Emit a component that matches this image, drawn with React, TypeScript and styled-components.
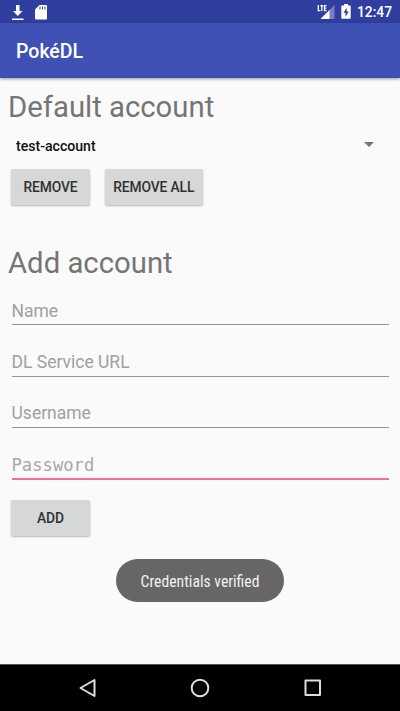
import React from "react";
import styled, { createGlobalStyle } from "styled-components";

const Global = createGlobalStyle`
  * { box-sizing: border-box; }
  body { margin: 0; background: #fafafa; font-family: Roboto, sans-serif; }
`;

const Screen = styled.div`
  position: relative;
  display: flex;
  flex-direction: column;
  width: 400px;
  height: 711px;
  overflow: hidden;
  background: #fafafa;
`;

const StatusBar = styled.div`
  display: flex;
  align-items: center;
  flex: none;
  height: 23px;
  padding: 0 8px 0 10px;
  background: #303f9f;
  color: #fff;

  svg { display: block; }
`;

const StatusGroup = styled.div<{ $end?: boolean }>`
  display: flex;
  align-items: center;
  gap: ${(p) => (p.$end ? 6 : 10)}px;
  margin-left: ${(p) => (p.$end ? "auto" : 0)};
`;

const Clock = styled.span`
  font-size: 13.8px;
  line-height: 23px;
  font-weight: 500;
  padding-top: 2px;
`;

const AppBar = styled.header`
  display: flex;
  align-items: center;
  flex: none;
  height: 55px;
  padding: 1px 16px 0;
  background: #3f51b5;
  color: #fff;
  font-size: 19.5px;
  font-weight: 500;
  box-shadow: 0 1px 3px rgba(0, 0, 0, 0.4);
`;

const Content = styled.main`
  display: flex;
  flex-direction: column;
  flex: 1;
  padding: 9px 8px 0;
`;

const Heading = styled.h1`
  margin: 0;
  height: 41px;
  line-height: 41px;
  font-size: 29.3px;
  font-weight: 400;
  color: #757575;
`;

const Spinner = styled.div`
  display: flex;
  align-items: center;
  justify-content: space-between;
  height: 36px;
  margin-bottom: 5px;
  padding: 0 18px 0 8px;
  font-size: 14.1px;
  font-weight: 500;
  color: #111;

  svg { margin-bottom: 3px; }
`;

const Buttons = styled.div`
  display: flex;
  gap: 15px;
  padding-left: 3px;
`;

const RaisedButton = styled.button<{ $width: number }>`
  width: ${(p) => p.$width}px;
  height: 36px;
  padding: 0;
  border: 0;
  border-radius: 2px;
  background: #d6d7d7;
  color: #303030;
  font: 500 13.8px Roboto, sans-serif;
  letter-spacing: -0.1px;
  box-shadow: 0 1px 2px rgba(0, 0, 0, 0.28);
`;

const AddSection = styled.section`
  margin-top: 38px;
`;

const Fields = styled.div`
  display: flex;
  flex-direction: column;
  gap: 21px;
  margin: 11px 3.5px 20px;
`;

const Field = styled.input<{ $focused?: boolean; $mono?: boolean }>`
  display: block;
  width: 377px;
  height: ${(p) => (p.$focused ? 31 : 30.4)}px;
  padding: 2px 0 0;
  border: 0;
  border-bottom: ${(p) => (p.$focused ? "2px solid #ff679b" : "1px solid #969696")};
  outline: 0;
  background: transparent;
  font: ${(p) => (p.$mono ? '17.2px "DejaVu Sans Mono", monospace' : "17.5px Roboto, sans-serif")};

  &::placeholder { color: ${(p) => (p.$mono ? "#a8a8a8" : "#a0a0a0")}; opacity: 1; }
`;

const Toast = styled.div`
  position: absolute;
  left: 116px;
  top: 559px;
  display: flex;
  align-items: center;
  justify-content: center;
  width: 168px;
  height: 43px;
  padding-top: 2px;
  border-radius: 22px;
  background: #666;
  color: #f2f2f2;
  font-family: "Roboto Condensed", Roboto, sans-serif;
  font-stretch: 75%;
  font-size: 15.7px;
  white-space: nowrap;
`;

const NavBar = styled.nav`
  display: flex;
  align-items: center;
  justify-content: space-between;
  flex: none;
  height: 47px;
  padding: 0 77px 1px;
  border-top: 1px solid #555;
  background: #000;
`;

export default function App() {
  return (
    <Screen>
      <Global />
      <StatusBar>
        <StatusGroup>
          <svg width="15" height="20" viewBox="0 0 15 20" fill="#fff">
            <path d="M6 3h3.500v6h3l-4.700 5L3 9h3z" />
            <path d="M2 16.500h11.500V18H2z" />
          </svg>
          <svg width="12" height="16" viewBox="0 0 12 16">
            <path fill="#fff" d="M4.500 1H11q1 0 1 1v12.500q0 1-1 1H1q-1 0-1-1V5.500z" />
            <path stroke="#303f9f" strokeWidth="1" d="M5 2.500v3M7.500 2.500v3M10 2.500v3" />
          </svg>
        </StatusGroup>
        <StatusGroup $end>
          <svg width="18" height="16" viewBox="0 0 18 16">
            <path fill="#7480bf" d="M17.500 1v14H3.500z" />
            <path fill="#fff" d="M12.500 6v9h-9z" />
            <path fill="#303f9f" d="M0 0h11v8H0z" />
            <path fill="none" stroke="#fff" strokeWidth="1.300" d="M1.300 1v5.600h2M3.300 1.600h3M4.800 1.600V7M9.500 1.600H7.500v5h2M7.500 4.100h1.800" />
          </svg>
          <svg width="10" height="15" viewBox="0 0 10 15">
            <path fill="#fff" d="M3 0h4v1.500h2q.7 0 .7.700V14q0 .8-.7.800H1q-.7 0-.7-.8V2.200q0-.7.7-.7h2z" />
            <path fill="#303f9f" d="M5.700 3.700 2.500 8.800h2v4l3.200-5.400h-2z" />
          </svg>
          <Clock>12:47</Clock>
        </StatusGroup>
      </StatusBar>
      <AppBar>PokéDL</AppBar>
      <Content>
        <Heading>Default account</Heading>
        <Spinner>
          test-account
          <svg width="10" height="5" viewBox="0 0 10 5">
            <path fill="#757575" d="M0 0h10L5 5z" />
          </svg>
        </Spinner>
        <Buttons>
          <RaisedButton $width={79}>REMOVE</RaisedButton>
          <RaisedButton $width={97.5}>REMOVE ALL</RaisedButton>
        </Buttons>
        <AddSection>
          <Heading>Add account</Heading>
          <Fields>
            <Field placeholder="Name" />
            <Field placeholder="DL Service URL" />
            <Field placeholder="Username" />
            <Field placeholder="Password" $focused $mono />
          </Fields>
          <Buttons>
            <RaisedButton $width={79}>ADD</RaisedButton>
          </Buttons>
        </AddSection>
      </Content>
      <Toast>Credentials verified</Toast>
      <NavBar>
        <svg width="22" height="22" viewBox="0 0 22 22" fill="none" stroke="#ddd" strokeWidth="2" strokeLinejoin="round">
          <path d="M17.500 3v16L3.500 11z" />
        </svg>
        <svg width="22" height="22" viewBox="0 0 22 22" fill="none" stroke="#ddd" strokeWidth="2">
          <circle cx="11" cy="11" r="8.300" />
        </svg>
        <svg width="22" height="22" viewBox="0 0 22 22" fill="none" stroke="#ddd" strokeWidth="2" strokeLinejoin="round">
          <path d="M4.500 3.500h14.500v14.500h-14.500z" />
        </svg>
      </NavBar>
    </Screen>
  );
}
